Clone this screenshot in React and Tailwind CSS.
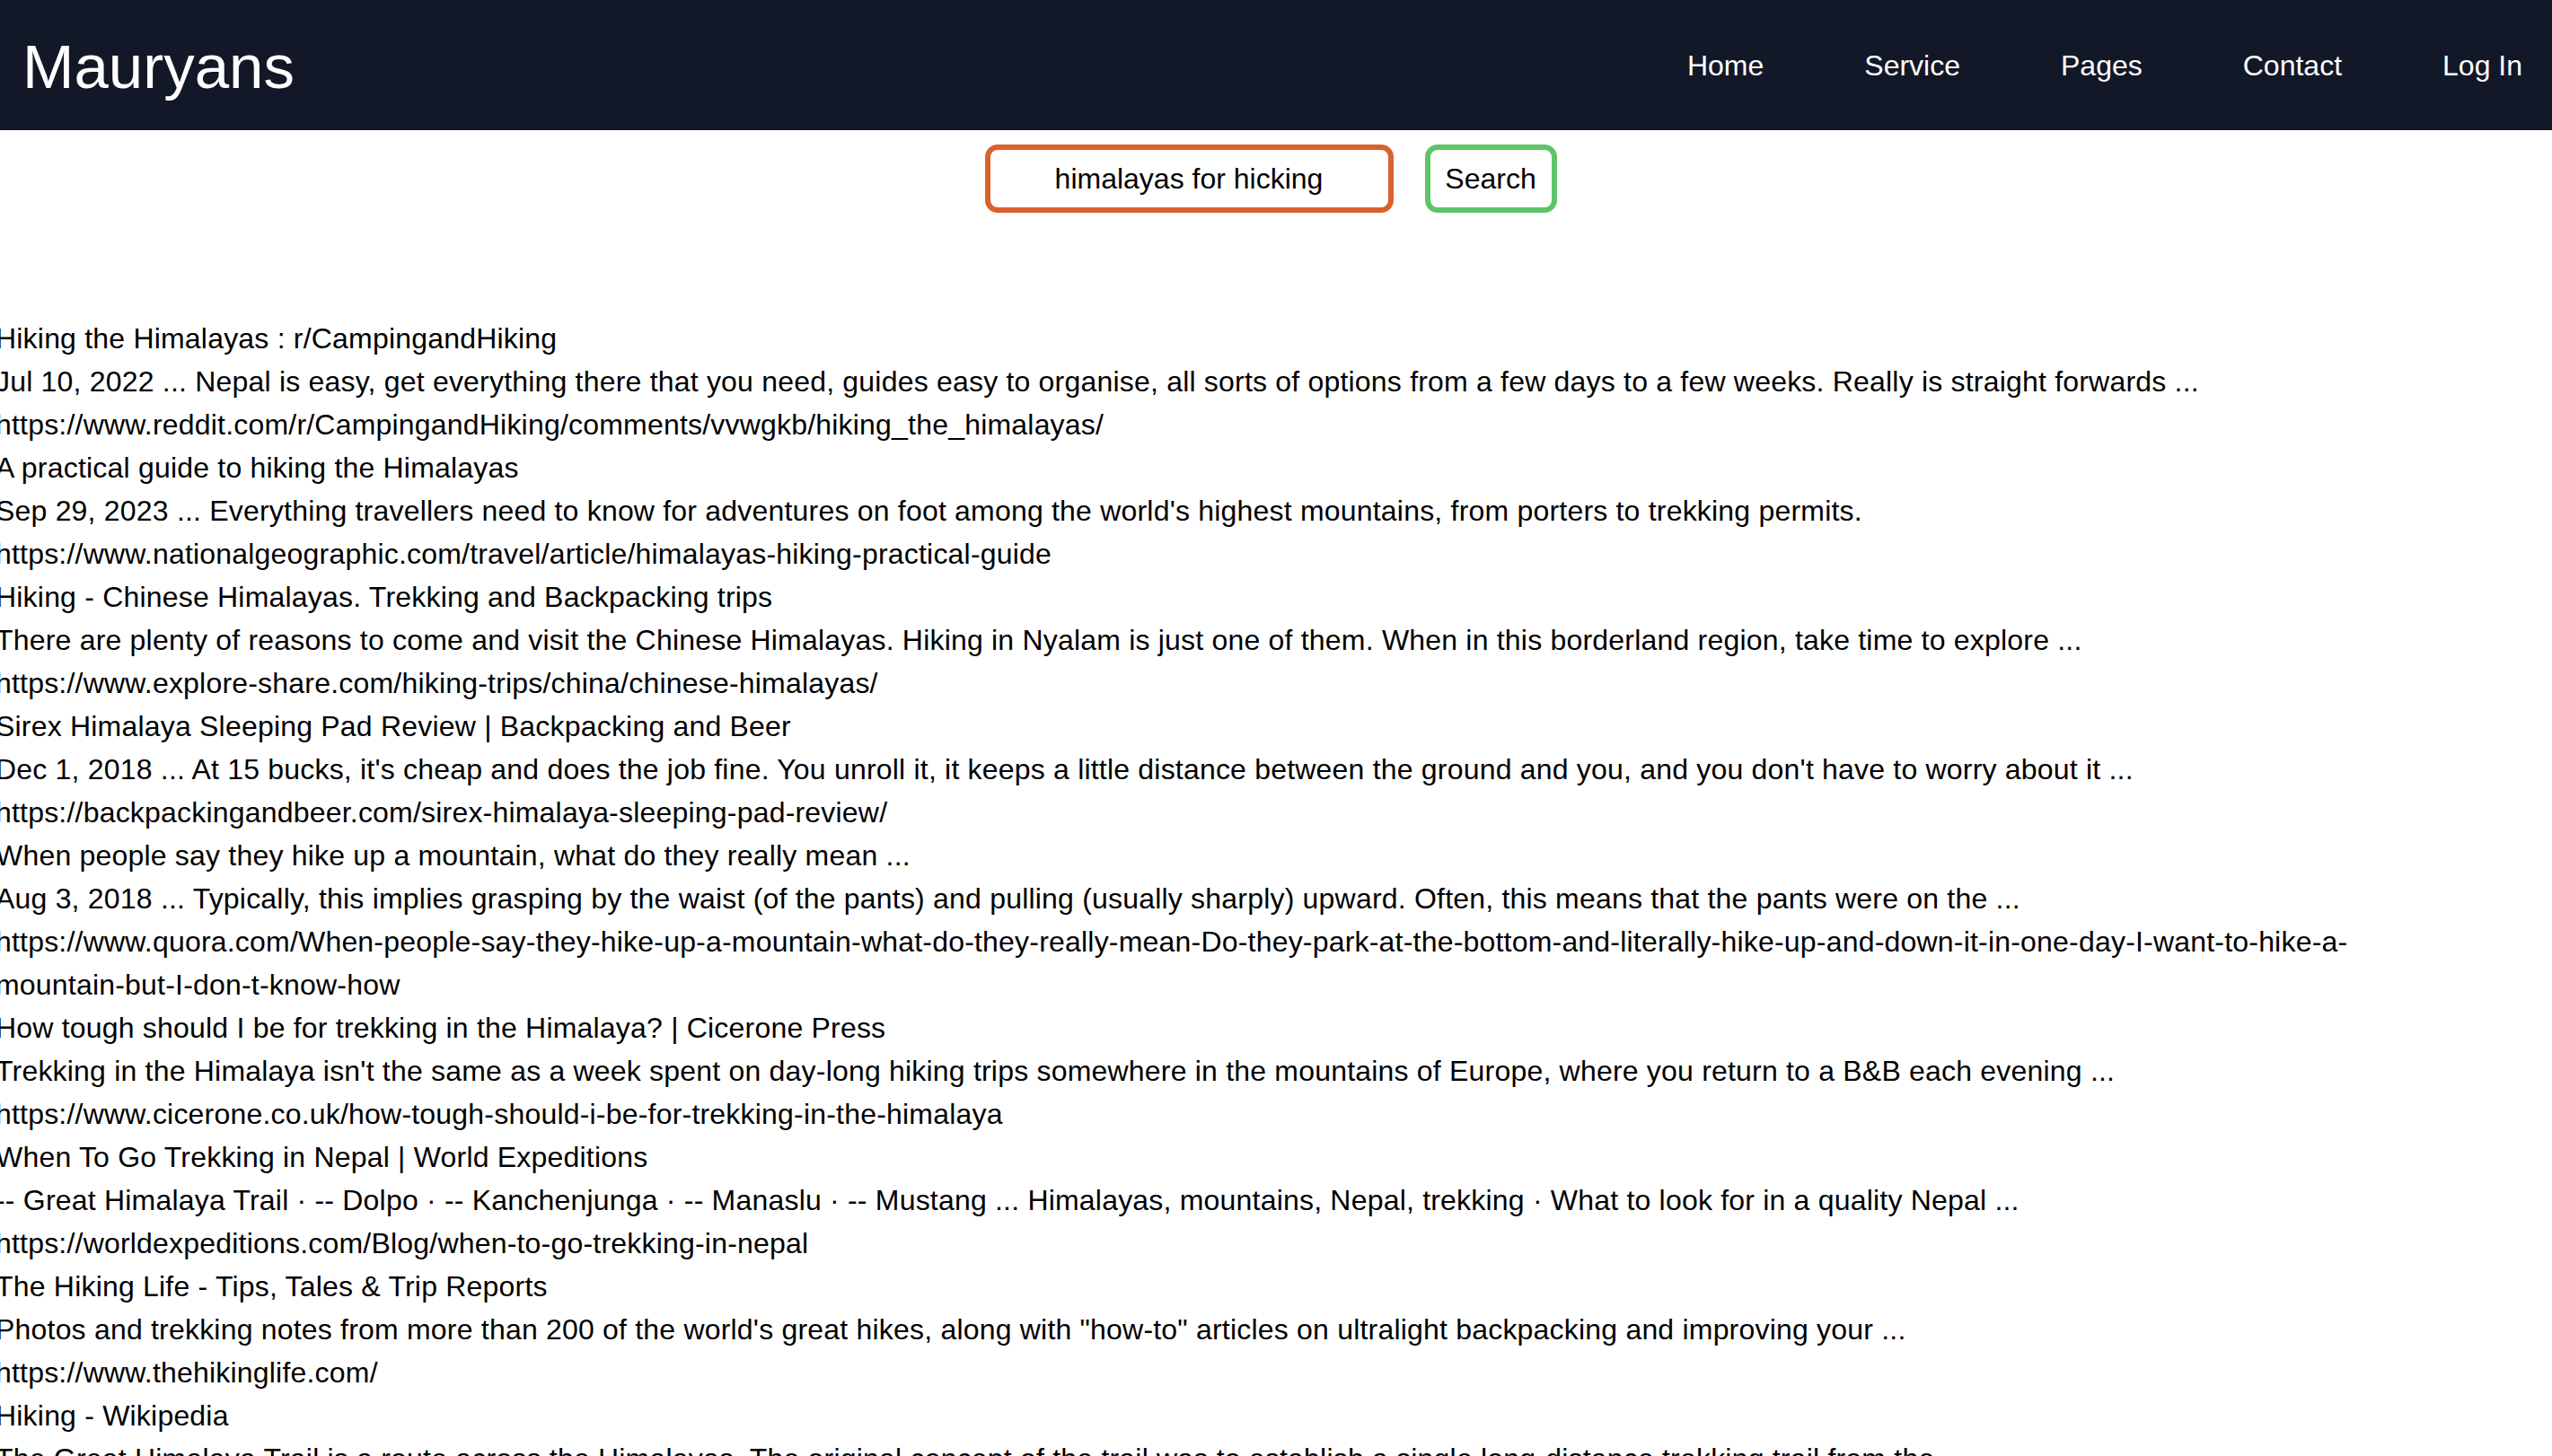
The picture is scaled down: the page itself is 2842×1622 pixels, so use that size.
import { useState } from "react";

const results = [
  {
    title: "Hiking the Himalayas : r/CampingandHiking",
    snippet:
      "Jul 10, 2022 ... Nepal is easy, get everything there that you need, guides easy to organise, all sorts of options from a few days to a few weeks. Really is straight forwards ...",
    link: "https://www.reddit.com/r/CampingandHiking/comments/vvwgkb/hiking_the_himalayas/",
  },
  {
    title: "A practical guide to hiking the Himalayas",
    snippet:
      "Sep 29, 2023 ... Everything travellers need to know for adventures on foot among the world's highest mountains, from porters to trekking permits.",
    link: "https://www.nationalgeographic.com/travel/article/himalayas-hiking-practical-guide",
  },
  {
    title: "Hiking - Chinese Himalayas. Trekking and Backpacking trips",
    snippet:
      "There are plenty of reasons to come and visit the Chinese Himalayas. Hiking in Nyalam is just one of them. When in this borderland region, take time to explore ...",
    link: "https://www.explore-share.com/hiking-trips/china/chinese-himalayas/",
  },
  {
    title: "Sirex Himalaya Sleeping Pad Review | Backpacking and Beer",
    snippet:
      "Dec 1, 2018 ... At 15 bucks, it's cheap and does the job fine. You unroll it, it keeps a little distance between the ground and you, and you don't have to worry about it ...",
    link: "https://backpackingandbeer.com/sirex-himalaya-sleeping-pad-review/",
  },
  {
    title: "When people say they hike up a mountain, what do they really mean ...",
    snippet:
      "Aug 3, 2018 ... Typically, this implies grasping by the waist (of the pants) and pulling (usually sharply) upward. Often, this means that the pants were on the ...",
    link: "https://www.quora.com/When-people-say-they-hike-up-a-mountain-what-do-they-really-mean-Do-they-park-at-the-bottom-and-literally-hike-up-and-down-it-in-one-day-I-want-to-hike-a-mountain-but-I-don-t-know-how",
  },
  {
    title: "How tough should I be for trekking in the Himalaya? | Cicerone Press",
    snippet:
      "Trekking in the Himalaya isn't the same as a week spent on day-long hiking trips somewhere in the mountains of Europe, where you return to a B&B each evening ...",
    link: "https://www.cicerone.co.uk/how-tough-should-i-be-for-trekking-in-the-himalaya",
  },
  {
    title: "When To Go Trekking in Nepal | World Expeditions",
    snippet:
      "-- Great Himalaya Trail · -- Dolpo · -- Kanchenjunga · -- Manaslu · -- Mustang ... Himalayas, mountains, Nepal, trekking · What to look for in a quality Nepal ...",
    link: "https://worldexpeditions.com/Blog/when-to-go-trekking-in-nepal",
  },
  {
    title: "The Hiking Life - Tips, Tales & Trip Reports",
    snippet:
      'Photos and trekking notes from more than 200 of the world\'s great hikes, along with "how-to" articles on ultralight backpacking and improving your ...',
    link: "https://www.thehikinglife.com/",
  },
  {
    title: "Hiking - Wikipedia",
    snippet:
      "The Great Himalaya Trail is a route across the Himalayas. The original concept of the trail was to establish a single long-distance trekking trail from the ...",
    link: "https://en.wikipedia.org/wiki/Hiking",
  },
];

const links = ["Home", "Service", "Pages", "Contact", "Log In"];

export default function App() {
  const [query, setQuery] = useState("himalayas for hicking");

  return (
    <div className="min-h-screen bg-white text-black font-['Liberation_Sans',Arial,sans-serif] overflow-hidden">
      <nav className="h-[145px] bg-[#121827] flex items-center justify-between pl-[25px] pr-[33px]">
        <h1 className="text-white text-[69px] leading-none pt-[4px]">Mauryans</h1>
        <ul className="flex items-center gap-[112px] text-white text-[32px]">
          {links.map((l) => (
            <li key={l}>{l}</li>
          ))}
        </ul>
      </nav>

      <div className="flex justify-center items-center gap-[35px] pt-[16px] pr-[12px]">
        <input
          value={query}
          onChange={(e) => setQuery(e.target.value)}
          className="w-[455px] h-[76px] border-[6px] border-[#da612e] rounded-[14px] text-center text-[32px] outline-none"
        />
        <button className="w-[147px] h-[76px] border-[6px] border-[#5ec468] rounded-[14px] text-[32px]">
          Search
        </button>
      </div>

      <div className="mt-[116px] -ml-[5px] pr-[90px] text-[32px] leading-[48px] tracking-[0.2px]">
        {results.map((r) => (
          <div key={r.link}>
            <p>{r.title}</p>
            <p>{r.snippet}</p>
            <p>{r.link}</p>
          </div>
        ))}
      </div>
    </div>
  );
}
